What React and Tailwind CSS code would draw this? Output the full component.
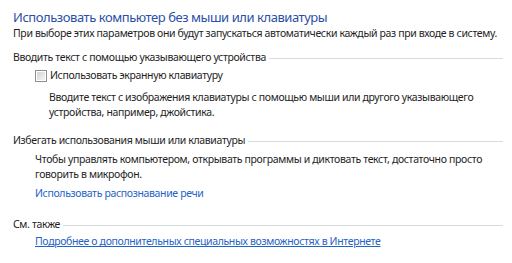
import React from 'react';

function SectionHeader({ children }) {
  return (
    <div className="flex items-center h-[15px] pr-[9px]">
      <span className="text-[#1e1e1e] whitespace-nowrap">{children}</span>
      <div className="flex-1 h-px bg-[#d6dbe0] ml-[3px] mt-[1px]" />
    </div>
  );
}

function Checkbox() {
  return (
    <div className="w-[12px] h-[12px] border border-[#8e8f8f] bg-white p-px">
      <div className="w-full h-full bg-gradient-to-br from-[#d4d4d4] to-[#f4f4f4]" />
    </div>
  );
}

export default function App() {
  return (
    <div
      className="w-[512px] h-[263px] bg-white pl-[13px] pt-[8px] overflow-hidden text-[10.5px] leading-[15px] tracking-[-0.35px] text-[#1e1e1e]"
      style={{ fontFamily: '"Noto Sans", "Open Sans", sans-serif' }}
    >
      <h1 className="text-[13px] leading-[18px] tracking-[-0.45px] text-[#2b4fa6] whitespace-nowrap">
        Использовать компьютер без мыши или клавиатуры
      </h1>
      <p className="whitespace-nowrap">
        При выборе этих параметров они будут запускаться автоматически каждый раз при входе в систему.
      </p>

      {/* Ввод текста */}
      <div className="mt-[9px]">
        <SectionHeader>Вводить текст с помощью указывающего устройства</SectionHeader>
        <label className="flex items-center gap-[3px] mt-[3px] ml-[22px] h-[15px]">
          <Checkbox />
          <span>Использовать экранную клавиатуру</span>
        </label>
        <p className="ml-[36px] mt-[7px] whitespace-nowrap">
          Вводите текст с изображения клавиатуры с помощью мыши или другого указывающего
          <br />
          устройства, например, джойстика.
        </p>
      </div>

      {/* Без мыши или клавиатуры */}
      <div className="mt-[13px]">
        <SectionHeader>Избегать использования мыши или клавиатуры</SectionHeader>
        <p className="ml-[22px] mt-[4px] whitespace-nowrap">
          Чтобы управлять компьютером, открывать программы и диктовать текст, достаточно просто
          <br />
          говорить в микрофон.
        </p>
        <a className="block ml-[22px] mt-[4px] text-[#1f63c6] cursor-pointer">
          Использовать распознавание речи
        </a>
      </div>

      {/* См. также */}
      <div className="mt-[16px]">
        <SectionHeader>См. также</SectionHeader>
        <a className="inline-block ml-[22px] mt-[2px] text-[#1f63c6] underline cursor-pointer">
          Подробнее о дополнительных специальных возможностях в Интернете
        </a>
      </div>
    </div>
  );
}
